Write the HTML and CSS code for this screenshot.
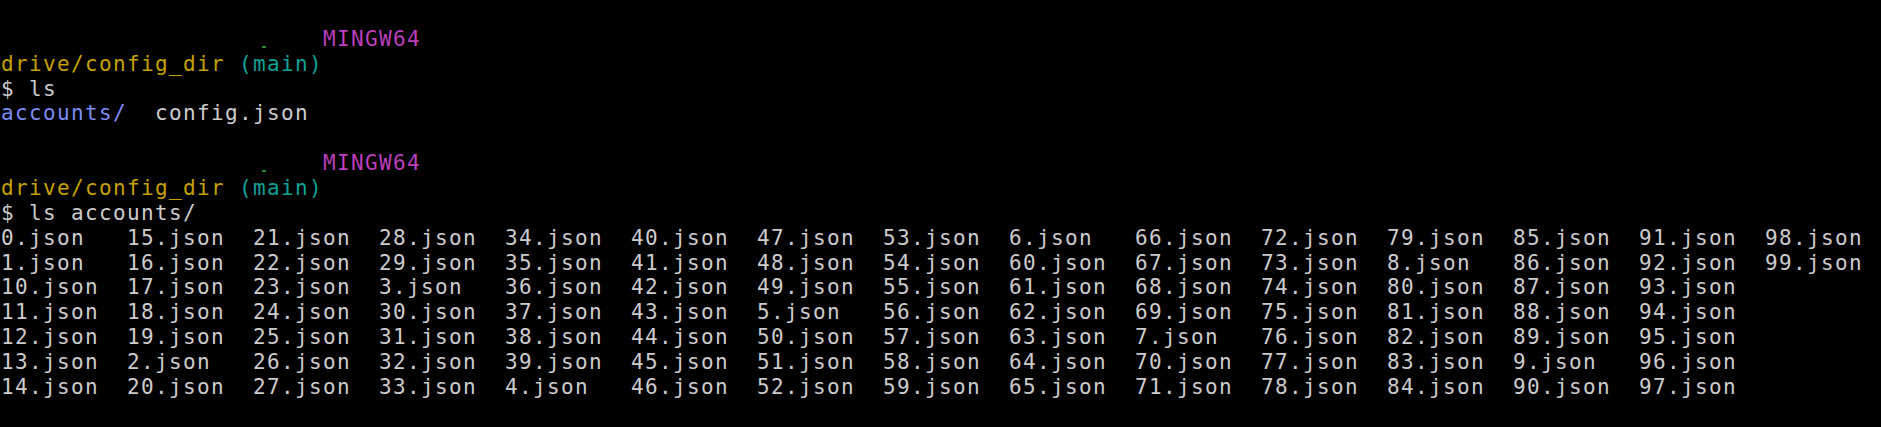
FILE: index.html
```html
<!DOCTYPE html>
<html lang="en">
<head>
<meta charset="utf-8">
<title>MINGW64 terminal</title>
<link rel="stylesheet" href="styles.css">
</head>
<body>
<main class="term">
  <div class="row"> </div>
  <div class="row"><span class="blank18"></span><span class="markcell"><span class="mark"></span></span><span class="pad4"></span><span class="mag">MINGW64</span></div>
  <div class="row"><span class="yel">drive/config_dir</span> <span class="cyan">(main)</span></div>
  <div class="row">$ ls</div>
  <div class="row"><span class="blue">accounts/</span>  config.json</div>
  <div class="row"> </div>
  <div class="row"><span class="blank18"></span><span class="markcell"><span class="mark"></span></span><span class="pad4"></span><span class="mag">MINGW64</span></div>
  <div class="row"><span class="yel">drive/config_dir</span> <span class="cyan">(main)</span></div>
  <div class="row">$ ls accounts/</div>
  <div class="listing">
    <span>0.json</span><span>1.json</span><span>10.json</span><span>11.json</span><span>12.json</span><span>13.json</span><span>14.json</span>
    <span>15.json</span><span>16.json</span><span>17.json</span><span>18.json</span><span>19.json</span><span>2.json</span><span>20.json</span>
    <span>21.json</span><span>22.json</span><span>23.json</span><span>24.json</span><span>25.json</span><span>26.json</span><span>27.json</span>
    <span>28.json</span><span>29.json</span><span>3.json</span><span>30.json</span><span>31.json</span><span>32.json</span><span>33.json</span>
    <span>34.json</span><span>35.json</span><span>36.json</span><span>37.json</span><span>38.json</span><span>39.json</span><span>4.json</span>
    <span>40.json</span><span>41.json</span><span>42.json</span><span>43.json</span><span>44.json</span><span>45.json</span><span>46.json</span>
    <span>47.json</span><span>48.json</span><span>49.json</span><span>5.json</span><span>50.json</span><span>51.json</span><span>52.json</span>
    <span>53.json</span><span>54.json</span><span>55.json</span><span>56.json</span><span>57.json</span><span>58.json</span><span>59.json</span>
    <span>6.json</span><span>60.json</span><span>61.json</span><span>62.json</span><span>63.json</span><span>64.json</span><span>65.json</span>
    <span>66.json</span><span>67.json</span><span>68.json</span><span>69.json</span><span>7.json</span><span>70.json</span><span>71.json</span>
    <span>72.json</span><span>73.json</span><span>74.json</span><span>75.json</span><span>76.json</span><span>77.json</span><span>78.json</span>
    <span>79.json</span><span>8.json</span><span>80.json</span><span>81.json</span><span>82.json</span><span>83.json</span><span>84.json</span>
    <span>85.json</span><span>86.json</span><span>87.json</span><span>88.json</span><span>89.json</span><span>9.json</span><span>90.json</span>
    <span>91.json</span><span>92.json</span><span>93.json</span><span>94.json</span><span>95.json</span><span>96.json</span><span>97.json</span>
    <span>98.json</span><span>99.json</span>
  </div>
</main>
</body>
</html>
```

FILE: styles.css
```css
html, body {
  margin: 0;
  padding: 0;
  background: #000000;
}

body {
  width: 1881px;
  height: 427px;
  overflow: hidden;
}

.term {
  padding: 2px 0 0 1px;
  font-family: "DejaVu Sans Mono", "Liberation Mono", monospace;
  font-size: 21px;
  letter-spacing: 1.357px;
  line-height: 24.86px;
  color: #cccccc;
}

.row {
  height: 24.86px;
  white-space: pre;
}

.blank18 {
  display: inline-block;
  width: 252px;
  height: 1px;
}

.pad4 {
  display: inline-block;
  width: 56px;
  height: 1px;
}

.markcell {
  display: inline-flex;
  width: 14px;
  height: 24.86px;
  justify-content: flex-end;
  align-items: flex-end;
  vertical-align: top;
}

.mark {
  display: block;
  width: 4px;
  height: 2px;
  margin: 0 1px 4px 0;
  background: #2a8a2a;
}

.mag { color: #bc3fbc; }
.yel { color: #c4a000; }
.cyan { color: #11a296; }
.blue { color: #7b8cf6; }

.listing {
  display: grid;
  grid-template-rows: repeat(7, 24.86px);
  grid-auto-flow: column;
  grid-auto-columns: 126px;
  white-space: pre;
}
```
